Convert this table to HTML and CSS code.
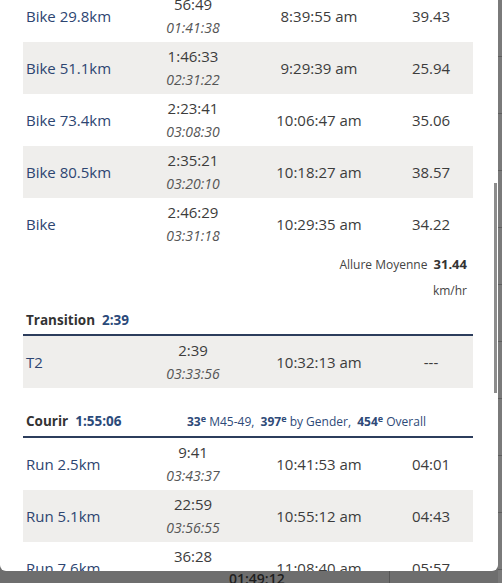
FILE: index.html
```
<!DOCTYPE html>
<html lang="fr">
<head>
<meta charset="utf-8">
<title>Splits</title>
<link rel="stylesheet" href="styles.css">
</head>
<body>
<div class="modal">
  <div class="scroll">
    <table class="splits first">
      <colgroup><col class="c1"><col class="c2"><col class="c3"><col class="c4"></colgroup>
      <tr><td class="label">Bike 29.8km</td><td class="time"><div>56:49</div><div class="cum">01:41:38</div></td><td class="clock">8:39:55 am</td><td class="pace">39.43</td></tr>
      <tr class="alt"><td class="label">Bike 51.1km</td><td class="time"><div>1:46:33</div><div class="cum">02:31:22</div></td><td class="clock">9:29:39 am</td><td class="pace">25.94</td></tr>
      <tr><td class="label">Bike 73.4km</td><td class="time"><div>2:23:41</div><div class="cum">03:08:30</div></td><td class="clock">10:06:47 am</td><td class="pace">35.06</td></tr>
      <tr class="alt"><td class="label">Bike 80.5km</td><td class="time"><div>2:35:21</div><div class="cum">03:20:10</div></td><td class="clock">10:18:27 am</td><td class="pace">38.57</td></tr>
      <tr><td class="label">Bike</td><td class="time"><div>2:46:29</div><div class="cum">03:31:18</div></td><td class="clock">10:29:35 am</td><td class="pace">34.22</td></tr>
    </table>
    <div class="summary">
      <div class="summary-line">Allure Moyenne <strong>31.44</strong></div>
      <div class="summary-unit">km/hr</div>
    </div>
    <div class="section-head tight">
      <span class="sec-name">Transition</span> <span class="sec-time">2:39</span>
    </div>
    <table class="splits">
      <colgroup><col class="c1"><col class="c2"><col class="c3"><col class="c4"></colgroup>
      <tr class="alt"><td class="label">T2</td><td class="time"><div>2:39</div><div class="cum">03:33:56</div></td><td class="clock">10:32:13 am</td><td class="pace">---</td></tr>
    </table>
    <div class="section-head">
      <span class="sec-name">Courir</span> <span class="sec-time">1:55:06</span>
      <span class="ranks"><b>33<sup>e</sup></b> M45-49, &nbsp;<b>397<sup>e</sup></b> by Gender, &nbsp;<b>454<sup>e</sup></b> Overall</span>
    </div>
    <table class="splits">
      <colgroup><col class="c1"><col class="c2"><col class="c3"><col class="c4"></colgroup>
      <tr><td class="label">Run 2.5km</td><td class="time"><div>9:41</div><div class="cum">03:43:37</div></td><td class="clock">10:41:53 am</td><td class="pace">04:01</td></tr>
      <tr class="alt"><td class="label">Run 5.1km</td><td class="time"><div>22:59</div><div class="cum">03:56:55</div></td><td class="clock">10:55:12 am</td><td class="pace">04:43</td></tr>
      <tr><td class="label">Run 7.6km</td><td class="time"><div>36:28</div><div class="cum">04:10:24</div></td><td class="clock">11:08:40 am</td><td class="pace">05:57</td></tr>
    </table>
  </div>
  <div class="thumb"></div>
</div>
<div class="side-strip"></div>
<div class="page-peek">
  <span class="peek-time">01:49:12</span>
  <span class="peek-divider"></span>
</div>
</body>
</html>
```
FILE: styles.css
```
html, body {
  margin: 0;
  padding: 0;
}
body {
  width: 502px;
  height: 583px;
  overflow: hidden;
  background: #6e6e6e;
  font-family: "Open Sans", "Liberation Sans", sans-serif;
  display: grid;
  grid-template-columns: 498px 4px;
  grid-template-rows: 571px 12px;
}
.modal {
  grid-column: 1;
  grid-row: 1;
  background: #ffffff;
  border-radius: 0 0 6px 6px;
  overflow: hidden;
  position: relative;
}
.scroll {
  padding: 0 25px 0 23px;
}
.splits {
  width: 450px;
  border-collapse: collapse;
  table-layout: fixed;
}
.splits.first {
  margin-top: -10px;
}
.c1 { width: 117px; }
.c2 { width: 106px; }
.c3 { width: 146px; }
.c4 { width: 81px; }
.splits tr {
  height: 52px;
}
.splits tr.alt {
  background: #efeeec;
}
.splits td {
  padding: 2px 0;
  vertical-align: middle;
  font-size: 15px;
  line-height: 24px;
  color: #3c3c3c;
  white-space: nowrap;
}
.splits td.label {
  padding-left: 3px;
  color: #2d4571;
}
.splits td.time {
  text-align: center;
}
.splits .cum {
  font-style: italic;
  font-size: 14px;
  color: #555555;
}
.splits td.clock {
  text-align: center;
}
.splits td.pace {
  text-align: center;
  padding-right: 3px;
}
.summary {
  text-align: right;
  padding: 5px 6px 0 0;
  color: #444444;
  font-size: 12px;
}
.summary-line {
  line-height: 18px;
}
.summary-line strong {
  font-size: 13px;
  font-weight: 700;
  color: #333333;
  margin-left: 3px;
}
.summary-unit {
  line-height: 18px;
  margin-top: 8px;
}
.section-head {
  display: flex;
  align-items: baseline;
  margin-top: 23px;
  padding: 0 0 4px 3px;
  line-height: 20px;
  border-bottom: 2px solid #2c3d5c;
  width: 447px;
}
.section-head.tight {
  margin-top: 10px;
}
.sec-name {
  font-size: 13.5px;
  font-weight: 700;
  color: #333333;
}
.sec-time {
  font-size: 13.5px;
  font-weight: 700;
  color: #2b4a7a;
  margin-left: 7px;
}
.ranks {
  margin-left: auto;
  margin-right: 47px;
  font-size: 12px;
  color: #2e4a78;
}
.ranks b {
  font-weight: 700;
}
.ranks sup {
  font-size: 9px;
  line-height: 0;
  vertical-align: 4px;
}
.thumb {
  position: absolute;
  left: 494px;
  top: 183px;
  width: 3px;
  height: 210px;
  background: #8c8c8c;
}
.side-strip {
  grid-column: 2;
  grid-row: 1 / span 2;
  background:
    repeating-linear-gradient(to bottom, transparent 0, transparent 56px, #5e5e5e 56px, #5e5e5e 57px),
    #7a7a7a;
}
.page-peek {
  grid-column: 1;
  grid-row: 2;
  display: flex;
  align-items: flex-start;
  overflow: hidden;
}
.peek-time {
  margin-left: 229px;
  font-size: 14px;
  font-weight: 600;
  line-height: 16px;
  color: #1e1e1e;
}
.peek-divider {
  margin-left: 104px;
  width: 1px;
  height: 12px;
  background: #555555;
}
```
